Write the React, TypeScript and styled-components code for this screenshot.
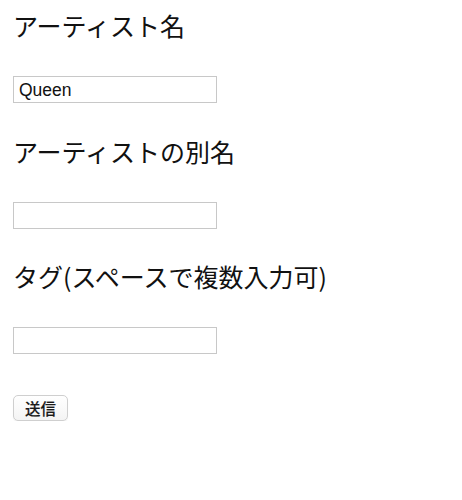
import styled, { createGlobalStyle } from "styled-components";

const GlobalStyle = createGlobalStyle`
  html, body {
    margin: 0;
    padding: 0;
    background: #ffffff;
  }
  body {
    font-family: "Noto Sans CJK JP", "Liberation Sans", sans-serif;
    color: #111111;
  }
`;

const Form = styled.form`
  display: flex;
  flex-direction: column;
  align-items: flex-start;
  padding: 11px 13px 0;
`;

const Field = styled.div`
  display: flex;
  flex-direction: column;
  align-items: flex-start;
  margin-bottom: 33.5px;
`;

const Label = styled.label`
  display: block;
  font-size: 25px;
  line-height: 29px;
  font-weight: 400;
  margin: 0 0 36px;
  color: #111111;
`;

const TextInput = styled.input`
  box-sizing: border-box;
  width: 204px;
  height: 27px;
  border: 1px solid #c8c8c8;
  border-radius: 0;
  padding: 1px 4px 0 5px;
  font-family: "Liberation Sans", Arial, sans-serif;
  font-size: 17.5px;
  color: #111111;
  background: #ffffff;
  outline: none;
`;

const SubmitButton = styled.button`
  box-sizing: border-box;
  margin-top: 7.5px;
  width: 55px;
  height: 26px;
  padding: 0;
  border: 1px solid #cfcfcf;
  border-radius: 5px;
  background: linear-gradient(#ffffff, #f4f4f4);
  box-shadow: 0 1px 1px rgba(0, 0, 0, 0.06);
  font-family: "Noto Sans CJK JP", sans-serif;
  font-size: 15.5px;
  font-weight: 500;
  -webkit-text-stroke: 0.15px #1a1a1a;
  line-height: 24px;
  color: #1a1a1a;
  cursor: pointer;
`;

const fields = [
  { label: "アーティスト名", value: "Queen" },
  { label: "アーティストの別名", value: "" },
  { label: "タグ(スペースで複数入力可)", value: "" },
];

function App() {
  return (
    <>
      <GlobalStyle />
      <Form onSubmit={(e) => e.preventDefault()}>
        {fields.map((f) => (
          <Field key={f.label}>
            <Label>{f.label}</Label>
            <TextInput type="text" defaultValue={f.value} />
          </Field>
        ))}
        <SubmitButton type="submit">送信</SubmitButton>
      </Form>
    </>
  );
}

export default App;
